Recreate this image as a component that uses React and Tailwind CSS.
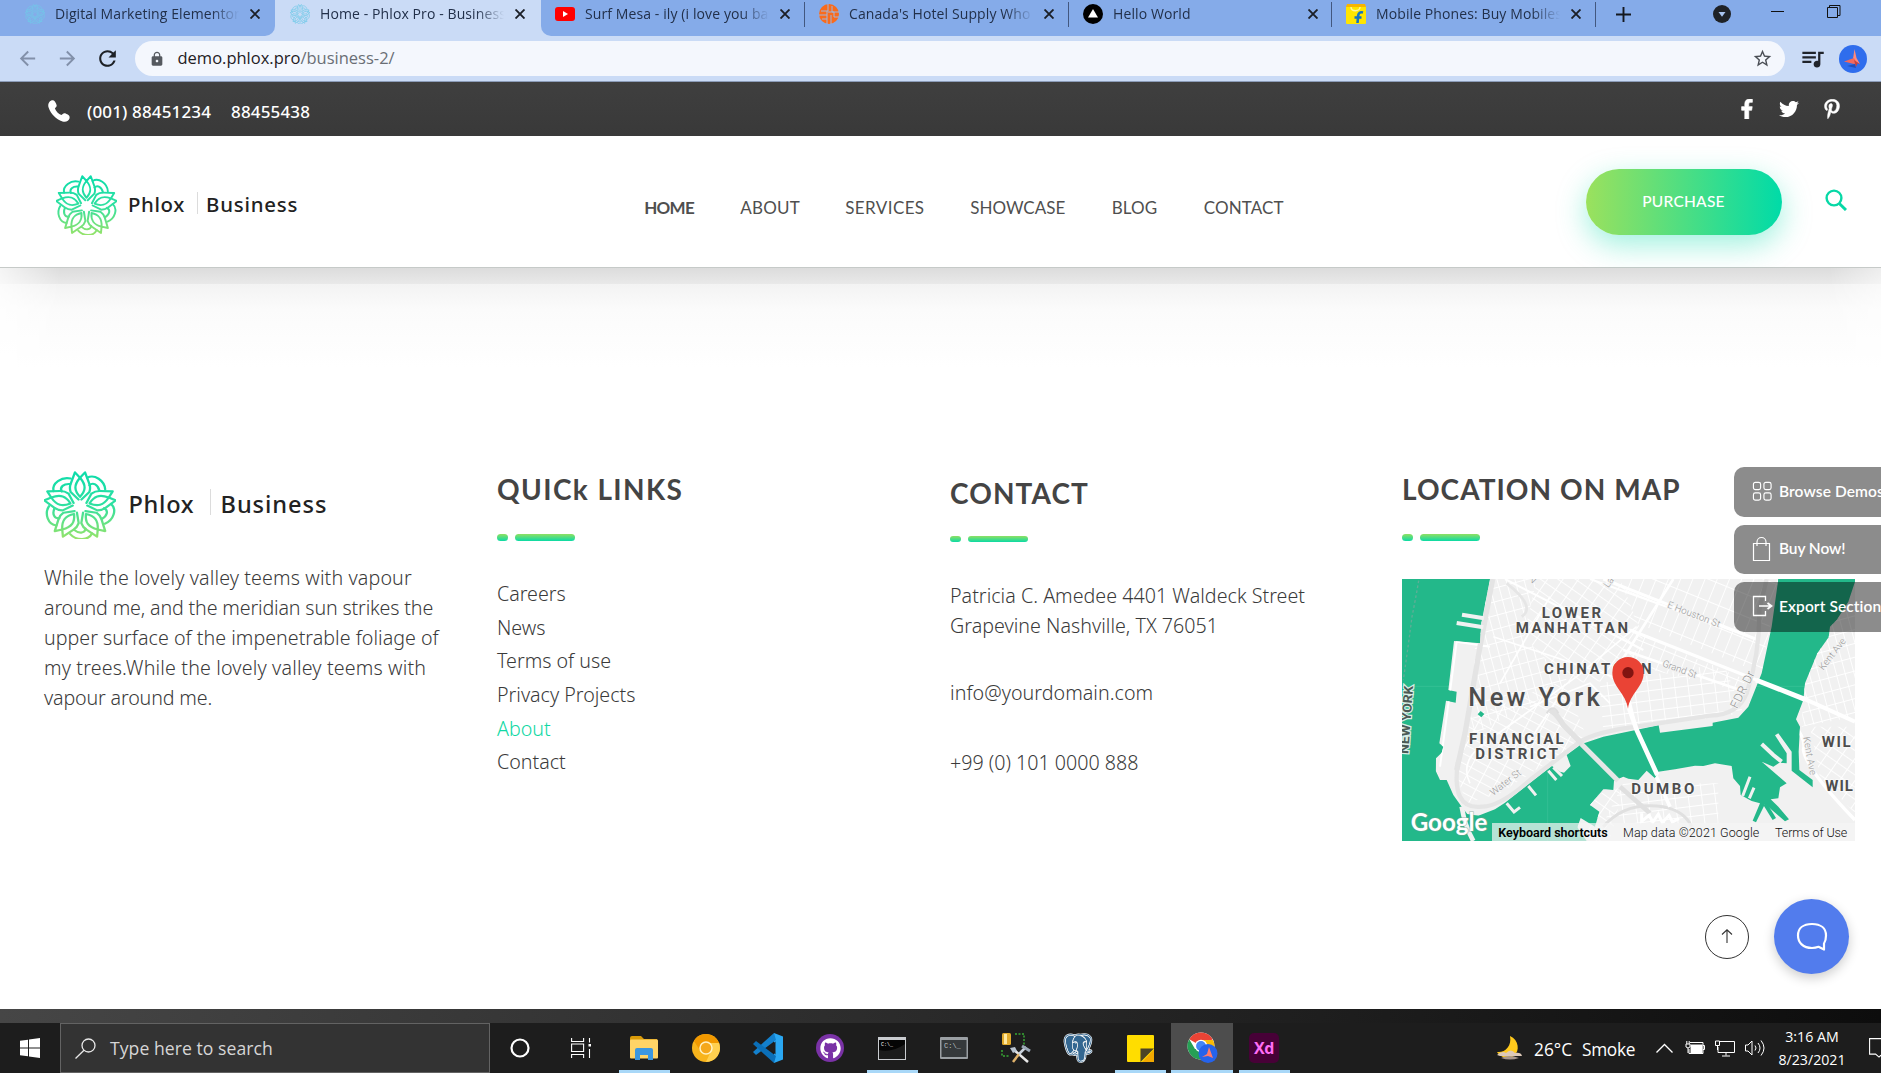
import React from "react";
import { FaFacebookF, FaTwitter, FaPinterestP, FaPhoneAlt, FaGithub } from "react-icons/fa";
import { MdLock, MdQueueMusic, MdStarBorder, MdArrowBack, MdArrowForward, MdRefresh } from "react-icons/md";
import { BiLogoPostgresql } from "react-icons/bi";

function Flower({ id, className, flat }) {
  return (
    <svg viewBox="0 0 100 100" preserveAspectRatio="none" className={className}>
      <defs>
        <linearGradient id={id + "g"} x1="0" y1="0" x2="0" y2="1">
          <stop offset="0" stopColor={flat ? "#6fc9e8" : "#0bdcab"} />
          <stop offset="0.5" stopColor={flat ? "#6fc9e8" : "#2ee0a0"} />
          <stop offset="1" stopColor={flat ? "#6fc9e8" : "#96e36a"} />
        </linearGradient>
        <mask id={id + "m"} maskUnits="userSpaceOnUse" x="0" y="0" width="100" height="100">
          {[0, 72, 144, 216, 288].map((a) => (
            <g key={a} transform={`rotate(${a} 50 52)`} fill="none" stroke="#fff" strokeWidth="3.200" strokeLinejoin="round" strokeLinecap="round">
              <path d="M48 42 L37 31 Q35 25 37 19 L43 2 L50 10 L57 2 L63 19 Q65 25 63 31 L52 42" />
              <path d="M50 10 C41 21 42 29 50 38 C58 29 59 21 50 10Z" />
              <path d="M60 10 C70 4 84 14 85 27" />
              <path d="M63 21 C68 16 75 20 77 29" />
            </g>
          ))}
        </mask>
      </defs>
      <rect width="100" height="100" fill={`url(#${id}g)`} mask={`url(#${id}m)`} />
    </svg>
  );
}

function Favicon({ kind }) {
  if (kind === "youtube")
    return (
      <svg viewBox="0 0 20 20" className="size-5">
        <rect y="3" width="20" height="14" rx="3" fill="#f00" />
        <path d="M8 7l5 3-5 3z" fill="#fff" />
      </svg>
    );
  if (kind === "hotel")
    return (
      <svg viewBox="0 0 20 20" className="size-5">
        <circle cx="10" cy="10" r="10" fill="#f96b1c" />
        <path d="M9 0v7H2M8 7v4H0M8 11v9M13 2v6h7M9 8h6v5h5M12 11v9M3 15h5" stroke="#9fb6dd" fill="none" />
      </svg>
    );
  if (kind === "vercel")
    return (
      <svg viewBox="0 0 20 20" className="size-5">
        <circle cx="10" cy="10" r="10" fill="#000" />
        <path d="M10 5l5 8.500H5z" fill="#fff" />
      </svg>
    );
  if (kind === "flipkart")
    return (
      <svg viewBox="0 0 20 20" className="size-5">
        <rect y="2" width="20" height="18" rx="1" fill="#ffe500" />
        <path d="M1 0h18l1 3H0z" fill="#f8b400" />
        <path d="M5 3c0 5 9 5 9 0" stroke="#fff5a0" fill="none" strokeWidth="1.4" />
        <path d="M17 8.500c-3-.8-4.500.4-4.800 3L11.500 19M8.500 13.500h7" stroke="#1273c4" strokeWidth="2.600" fill="none" />
      </svg>
    );
  return <Flower id={kind} flat className="size-5" />;
}

function Tab({ icon, title, className, sep = true }) {
  return (
    <div className={`flex h-9 shrink-0 items-start pt-1 ${className}`}>
      <Favicon kind={icon} />
      <div className="ml-2.5 h-5 w-[186px] overflow-hidden whitespace-nowrap leading-5 [mask-image:linear-gradient(to_right,#000_84%,transparent_99%)]">{title}</div>
      <svg viewBox="0 0 10 10" className="ml-[9px] mt-[5px] size-[10px] shrink-0" stroke="#1b1f27" strokeWidth="1.900">
        <path d="M.5.5l9 9M9.500.5l-9 9" />
      </svg>
      {sep && <div className="-mt-0.5 ml-auto h-[25px] w-px bg-[#42577f]" />}
    </div>
  );
}

function TabStrip() {
  return (
    <div className="flex h-9 shrink-0 bg-[#85abe9] font-['Open_Sans',sans-serif] text-[14px] tracking-[0.1px] text-[#22304a]">
      <div className="bg-[#cadbf6]">
        <Tab icon="favA" title="Digital Marketing Elementor" className="w-[275px] rounded-br-[10px] bg-[#85abe9] pl-[25px]" sep={false} />
      </div>
      <Tab icon="favB" title="Home - Phlox Pro - Business" className="w-[266px] bg-[#cadbf6] pl-[15px]" sep={false} />
      <div className="bg-[#cadbf6]">
        <Tab icon="youtube" title="Surf Mesa - ily (i love you ba" className="w-[264px] rounded-bl-[10px] bg-[#85abe9] pl-[14px]" />
      </div>
      <Tab icon="hotel" title="Canada's Hotel Supply Who" className="w-[264px] pl-[14px]" />
      <Tab icon="vercel" title="Hello World" className="w-[263px] pl-[14px]" />
      <Tab icon="flipkart" title="Mobile Phones: Buy Mobiles" className="w-[264px] pl-[14px]" />
      <svg viewBox="0 0 15 15" className="ml-[20px] mt-[7px] size-[15px]" stroke="#14181f" strokeWidth="1.900">
        <path d="M7.500 0v15M0 7.500h15" />
      </svg>
      <svg viewBox="0 0 18 18" className="ml-[82px] mt-[5px] size-[18px]">
        <circle cx="9" cy="9" r="9" fill="#1f2227" />
        <path d="M5.500 7h7L9 11.800z" fill="#a9c4ef" />
      </svg>
      <svg viewBox="0 0 14 14" className="ml-[40px] mt-1 size-3.5">
        <path d="M0 7.500h13" stroke="#111" />
      </svg>
      <svg viewBox="0 0 14 14" className="ml-[42px] mt-[5px] size-3.5" fill="none" stroke="#111">
        <path d="M.5 2.500h10v10h-10zM2.500 2.500v-2h10.500v10h-2.500" />
      </svg>
    </div>
  );
}

function Toolbar() {
  return (
    <div className="flex h-[46px] shrink-0 items-center border-b border-[#8c9cb8] bg-[#cadbf6]">
      <MdArrowBack className="ml-[16px] size-[23px] text-[#8290a9]" />
      <MdArrowForward className="ml-[17px] size-[23px] text-[#8290a9]" />
      <MdRefresh className="ml-[16px] size-[25px] text-[#1d2126]" />
      <div className="ml-[15px] flex h-[35px] w-[1650px] items-center rounded-full bg-[#f4f7fd] font-['Open_Sans',sans-serif] text-[16.500px] text-[#1f2024]">
        <MdLock className="ml-[14px] size-[16px] text-[#55595f]" />
        <span className="ml-[12.500px]">demo.phlox.pro<span className="text-[#6a6e75]">/business-2/</span></span>
        <MdStarBorder className="ml-auto mr-[12px] size-[21px] text-[#4a4e55]" />
      </div>
      <MdQueueMusic className="ml-[14px] size-[27px] text-[#20242b]" />
      <svg viewBox="0 0 28 28" className="ml-[13px] size-7">
        <circle cx="14" cy="14" r="14" fill="#2f6ded" />
        <path d="M8 21l8-2 1 4z" fill="#1d4fbf" />
        <path d="M15.500 4l2 9 3.500 6-4-2-3-3z" fill="#ff8a7c" />
        <path d="M5 16.500l10-3.500 3 5-3 1z" fill="#f2695f" />
        <path d="M15 15l6 4-2.500-.5L17 22z" fill="#c9423f" />
      </svg>
    </div>
  );
}

function TopBar() {
  return (
    <div className="flex h-[54px] shrink-0 items-center bg-[linear-gradient(#3f3f3f,#393939)] pl-12 text-white">
      <svg viewBox="0 0 22 22" className="mt-[4px] size-[22px]" fill="#fff">
        <path d="M1.200 2.200C2.500.6 4.200.1 5.600.5 7 .9 8.600 4.200 8.700 5.600c0 1.400-1.300 2-1.800 3C8 11.500 10.500 14 13.400 15.100c1-.5 1.600-1.800 3-1.800 1.400.1 4.700 1.700 5.100 3.100.4 1.400-.1 3.100-1.700 4.400-1.500 1.100-3.500 1.200-5.300.6C7.800 19 3 14.200.6 7.500 0 5.700.1 3.700 1.200 2.200z" />
      </svg>
      <div className="ml-[17px] pt-[6px] font-['Noto_Sans',sans-serif] text-[17px] font-medium leading-6 tracking-[0.15px]">(001) 88451234</div>
      <div className="ml-[20px] pt-[6px] font-['Noto_Sans',sans-serif] text-[17px] font-medium leading-6 tracking-[0.15px]">88455438</div>
      <div className="ml-auto mr-[39px] flex items-center pb-[1px]">
        <FaFacebookF className="size-5 stroke-white [stroke-width:18]" />
        <FaTwitter className="ml-[22px] size-5" />
        <FaPinterestP className="ml-[23px] size-5 stroke-white [stroke-width:12]" />
      </div>
    </div>
  );
}

const nav = [
  ["HOME", "w-[96px] font-bold tracking-[-0.75px]"],
  ["ABOUT", "w-[105px] tracking-[0.25px]"],
  ["SERVICES", "w-[125px] tracking-[0.4px]"],
  ["SHOWCASE", "w-[141.5px]"],
  ["BLOG", "w-[92px] tracking-[0.1px]"],
  ["CONTACT", "w-[80px] tracking-[0.1px]"],
];

function Header() {
  return (
    <header className="flex h-[132px] shrink-0 border-b border-[#c6cac8] bg-white">
      <Flower id="hl" className="ml-[56px] mt-[38.500px] h-[60px] w-[61px]" />
      <div className="ml-[11px] mt-[54.500px] flex h-7 items-center font-['Noto_Sans',sans-serif] text-[20.400px] font-medium text-[#222]">
        <span className="w-[68.500px] tracking-[0.6px]">Phlox</span>
        <span className="mt-[-4px] h-[22px] w-px bg-[#dcdcdc]" />
        <span className="ml-[8.500px] tracking-[0.800px]">Business</span>
      </div>
      <nav className="ml-[346px] mt-[60px] flex h-[24px] w-[640px] shrink-0 whitespace-nowrap font-['Lato',sans-serif] text-[17px] leading-6 text-[#4f4f4f]">
        {nav.map(([t, c]) => (
          <a key={t} className={`shrink-0 ${c}`}>{t}</a>
        ))}
      </nav>
      <button className="ml-auto mt-[33px] flex h-[66px] w-[196px] shrink-0 items-center justify-center rounded-full bg-[linear-gradient(to_right,#9be15d,#00dba8)] pr-[1px] pb-[1px] font-['Lato',sans-serif] text-[15.500px] font-medium tracking-[0.250px] text-white shadow-[0_10px_30px_rgba(0,219,168,0.38)]">PURCHASE</button>
      <svg viewBox="0 0 22 22" className="ml-[43px] mr-[34px] mt-[53px] size-[22px]" fill="none" stroke="#07d8a6" strokeWidth="2.400">
        <circle cx="9" cy="9" r="7.400" />
        <path d="M14.300 14.500L21 21" strokeWidth="3" />
      </svg>
    </header>
  );
}

function Bars({ className }) {
  return (
    <div className={`flex gap-[7px] ${className}`}>
      <div className="h-full w-[11px] rounded-full bg-[linear-gradient(#8fe062,#0bdaa5)]" />
      <div className="h-full w-[60px] rounded-full bg-[linear-gradient(#8fe062,#0bdaa5)]" />
    </div>
  );
}

function Heading({ children, className }) {
  return <h3 className={`whitespace-nowrap font-['Lato',sans-serif] text-[28px] font-bold leading-8 text-[#444] ${className}`}>{children}</h3>;
}

const land = "#f1f1f1";
const water = "#23b88a";

function MapView() {
  return (
    <svg viewBox="36 387 1359 786" className="mt-[38px] h-[262px] w-[453px]" fontFamily="Roboto, sans-serif">
      <defs>
        <clipPath id="man">
          <path d="M300 387L274 520 270 580 192 573 175 720 200 725 197 758 168 752 148 880 160 890 155 908 138 925 137 962 150 990 170 990 190 1035 215 1070 232 1092 265 1097 315 1078 345 1058 474 957 486 948 510 965 522 968 542 948 530 915 575 882 640 860 806 826 810 848 968 828 968 818 1045 803 1075 770 1115 670 1145 530 1165 387Z" />
        </clipPath>
        <clipPath id="bk">
          <path d="M1395 395L1375 455 1340 510 1320 530 1316 562 1282 610 1245 700 1240 750 1218 808 1230 830 1226 905 1228 960 1268 990 1268 1012 1205 962 1205 905 1165 850 1155 856 1190 910 1190 940 1168 938 1150 950 1115 935 1190 1000 1170 1012 1165 1045 1142 1048 1165 1070 1197 1108 1185 1114 1125 1062 1098 1117 1088 1112 1110 1060 1085 1053 1052 1035 1050 1008 1030 985 1025 948 975 940 940 948 915 947 855 958 805 965 795 985 770 962 745 990 715 986 700 980 672 992 670 1020 648 1018 640 1018 600 1065 628 1085 615 1130 572 1104 562 1132 590 1173 1395 1173Z" />
        </clipPath>
        <pattern id="st1" width="34" height="62" patternUnits="userSpaceOnUse" patternTransform="rotate(22)">
          <path d="M0 1H34M1 0V62" stroke="#fff" strokeWidth="3.500" fill="none" />
        </pattern>
        <pattern id="st2" width="26" height="44" patternUnits="userSpaceOnUse" patternTransform="rotate(-62)">
          <path d="M0 1H26M1 0V44" stroke="#fff" strokeWidth="3.500" fill="none" />
        </pattern>
        <pattern id="st3" width="40" height="30" patternUnits="userSpaceOnUse" patternTransform="rotate(-7)">
          <path d="M0 1H40M1 0V30" stroke="#fff" strokeWidth="3.500" fill="none" />
        </pattern>
        <pattern id="st4" width="26" height="40" patternUnits="userSpaceOnUse" patternTransform="rotate(-15)">
          <path d="M0 1H26M1 0V40" stroke="#fff" strokeWidth="3.500" fill="none" />
        </pattern>
        <pattern id="st5" width="30" height="38" patternUnits="userSpaceOnUse" patternTransform="rotate(-55)">
          <path d="M0 1H30M1 0V38" stroke="#fff" strokeWidth="3.500" fill="none" />
        </pattern>
      </defs>
      <rect x="36" y="387" width="1359" height="786" fill={water} />
      <path d="M36 709H1395M473 387V1173" stroke="#3cc299" strokeWidth="2" />
      <path d="M86 392Q80 430 66 500Q56 580 40 690" stroke="#5fae96" strokeWidth="4" strokeDasharray="8 7" fill="none" />

      <g clipPath="url(#man)">
        <rect x="36" y="387" width="1359" height="786" fill={land} />
        <path d="M690 387H1165L1115 670 740 520Z" fill="url(#st1)" />
        <path d="M300 387H440L400 560 540 700 240 860 260 500Z" fill="url(#st4)" />
        <path d="M440 387H690L760 560 700 690 540 700 400 560Z" fill="url(#st5)" />
        <path d="M630 700L1000 640 1060 790 640 850Z" fill="url(#st3)" />
        <path d="M240 800L520 690 590 860 330 1030 230 1060 200 980Z" fill="url(#st2)" />
        <path d="M740 550L1070 690 1040 720 700 640Z" fill="url(#st1)" />
        <g fill="none" stroke="#fff">
          <path d="M300 590L200 575 150 950M345 387L760 600M600 387L1100 568" strokeWidth="6" />
          <path d="M640 387L1100 568M720 540L1100 690" strokeWidth="9" />
          <path d="M850 387L690 640 740 840M700 600L1050 720" strokeWidth="8" />
          <path d="M240 1000Q210 940 270 890L560 680 740 530M420 770L600 700 660 760" strokeWidth="5" />
          <path d="M310 560L700 690M330 700L480 440M400 900L520 720" strokeWidth="5" />
        </g>
        <path d="M308 387L270 590 225 850 200 960" stroke="#e4e4e4" strokeWidth="16" fill="none" />
        <path d="M350 400Q440 470 395 500" stroke="#e6e6e6" strokeWidth="8" fill="none" />
        <path d="M205 930Q180 1080 275 1070Q330 1070 420 990L570 875Q620 845 740 830L960 797Q1045 795 1070 730Q1110 610 1108 480L1130 387" stroke="#e5e5e5" strokeWidth="13" fill="none" />
        <path d="M480 780Q500 790 520 825L580 885" stroke="#e2e2e2" strokeWidth="16" fill="none" />
        <path d="M470 790q20-30 35 0" stroke="#dedede" strokeWidth="6" fill="none" />
      </g>
      <path d="M216 494L282 505M200 519L280 532" stroke={land} strokeWidth="12" />
      <path d="M272 783l11 9-9 10-11-9z" fill={water} />
      <g stroke={land} strokeWidth="9" fill="none">
        <path d="M475 962l24 28M490 952l26 26M415 1008l23 28M350 1060l22 26 18-14" />
      </g>

      <g clipPath="url(#bk)">
        <rect x="36" y="387" width="1359" height="786" fill={land} />
        <path d="M1300 540L1395 460V800L1235 830 1240 720Z" fill="url(#st4)" />
        <path d="M1260 830H1395V1090L1290 980Z" fill="url(#st5)" />
        <path d="M700 1000L985 1000V1120H640Z" fill="url(#st3)" />
        <path d="M600 1040L700 1010 660 1173H590Z" fill="url(#st5)" />
        <path d="M1210 820Q1250 870 1240 900Q1250 960 1395 1110" stroke="#fff" strokeWidth="10" fill="none" />
        <path d="M1240 745L1395 815" stroke="#fff" strokeWidth="12" />
        <path d="M640 1130Q700 1060 800 1068Q880 1075 905 1130" stroke="#e0e0e0" strokeWidth="9" fill="none" />
        <path d="M690 1010L780 1090" stroke="#e0e0e0" strokeWidth="14" />
        <path d="M755 1090v24l22-18 12 20 16-24 12 26 20-22 10 20 20-10" stroke="#fff" strokeWidth="9" fill="none" />
        <path d="M790 960L840 1070" stroke="#fff" strokeWidth="11" />
      </g>
      <path d="M1115 882L1150 915 1175 935" stroke={land} strokeWidth="12" fill="none" />
      <path d="M1058 1038l22-58M1078 1045l14-32" stroke={land} strokeWidth="9" />
      <path d="M1125 1062l28 45" stroke={water} strokeWidth="12" />
      <path d="M574 882L684 992" stroke="#e6e6e6" strokeWidth="15" />
      <path d="M714 765L740 840 802 975" stroke="#fff" strokeWidth="14" fill="none" />
      <path d="M1098 690L1245 748" stroke="#fff" strokeWidth="15" />
      <path d="M215 1070Q225 1130 250 1173" stroke={land} strokeWidth="14" fill="none" />

      <g fontSize="29" fill="#999" stroke="#f4f4f4" strokeWidth="5" paintOrder="stroke">
        <text transform="translate(830 472) rotate(21)" textLength="168">E Houston St</text>
        <text transform="translate(815 648) rotate(20)" textLength="108">Grand St</text>
        <text transform="translate(310 1038) rotate(-38)" textLength="108">Water St</text>
        <text transform="translate(1300 662) rotate(-52)" textLength="112">Kent Ave</text>
        <text transform="translate(1240 862) rotate(80)" textLength="116">Kent Ave</text>
        <text transform="translate(1042 778) rotate(-64)" textLength="120" fontSize="36" fill="#8f8f8f">FDR Dr</text>
        <text transform="translate(655 415) rotate(-55)">La</text>
        <text transform="translate(418 395) rotate(25)">V</text>
      </g>
      <text transform="translate(55 912) rotate(-86)" textLength="204" lengthAdjust="spacingAndGlyphs" fontSize="38" fontWeight="700" fill="#4b5a55" stroke="#d9eee6" strokeWidth="7" paintOrder="stroke">NEW YORK</text>
      <g fill="#4d4d4d" stroke="#fafafa" strokeWidth="5" paintOrder="stroke" fontSize="45" fontWeight="700">
        <text x="455" y="503" textLength="178">LOWER</text>
        <text x="377" y="548" textLength="337">MANHATTAN</text>
        <text x="462" y="671" textLength="323">CHINATOWN</text>
        <text x="237" y="881" textLength="284">FINANCIAL</text>
        <text x="256" y="926" textLength="248">DISTRICT</text>
        <text x="724" y="1031" textLength="189">DUMBO</text>
        <text x="1295" y="892" letterSpacing="5">WIL</text>
        <text x="1306" y="1024" letterSpacing="3">WIL</text>
        <text x="235" y="768" textLength="394" fontSize="76" fontWeight="500" stroke="#f6f6f6">New York</text>
      </g>
      <path d="M714 776C708 730 667 710 667 668a47 47 0 0 1 94 0C761 710 720 730 714 776Z" fill="#ea4335" />
      <circle cx="714" cy="668" r="17" fill="#811411" />
      <text x="62" y="1143" fontFamily="Lato, sans-serif" fontSize="74" fontWeight="700" textLength="230" lengthAdjust="spacingAndGlyphs" fill="#fff" stroke="#7c9c90" strokeOpacity="0.500" strokeWidth="5" paintOrder="stroke">Google</text>
      <rect x="306" y="1119" width="1089" height="54" fill="#f5f5f5" fillOpacity="0.700" />
      <g fontSize="37.500" fill="#111">
        <text x="325" y="1161" fontWeight="600" textLength="328" fill="#000">Keyboard shortcuts</text>
        <text x="699" y="1161" textLength="409">Map data ©2021 Google</text>
        <text x="1155" y="1161" textLength="217">Terms of Use</text>
      </g>
    </svg>
  );
}

const links = [["Careers", ""], ["News", ""], ["Terms of use", ""], ["Privacy Projects", ""], ["About", "text-[#10d8a4]"], ["Contact", ""]];

function Footer() {
  return (
    <footer className="flex flex-1 pl-[44px] pt-[86px] font-['Noto_Sans',sans-serif] text-[19.650px] font-light text-[#3a3a3a]">
      <div className="w-[453px] shrink-0 pt-[17px]">
        <div className="flex">
          <Flower id="fl" className="h-[68px] w-[72px]" />
          <div className="ml-[12.500px] mt-[16px] flex h-[34px] items-center text-[23.600px] font-medium leading-[34px] text-[#222]">
            <span className="w-[81px] tracking-[0.7px]">Phlox</span>
            <span className="-mt-1 h-[26px] w-px bg-[#dcdcdc]" />
            <span className="ml-[10px] tracking-[0.950px]">Business</span>
          </div>
        </div>
        <p className="mt-[24px] whitespace-nowrap leading-[30px]">
          <span className="tracking-[0.130px]">While the lovely valley teems with vapour</span><br />
          <span className="tracking-[-0.150px]">around me, and the meridian sun strikes the</span><br />
          <span className="tracking-[0.030px]">upper surface of the impenetrable foliage of</span><br />
          <span className="tracking-[0.160px]">my trees.While the lovely valley teems with</span><br />
          <span className="tracking-[-0.150px]">vapour around me.</span>
        </p>
      </div>
      <div className="w-[453px] shrink-0 pt-[19px]">
        <Heading className="tracking-[1.400px]">QUICk LINKS</Heading>
        <Bars className="mt-[29px] h-[7px]" />
        <div className="mt-[36px]">
          {links.map(([t, c]) => (
            <div key={t} className={`h-[33.700px] leading-[33.700px] ${c}`}>{t}</div>
          ))}
        </div>
      </div>
      <div className="w-[453px] shrink-0 pt-[23px]">
        <Heading className="tracking-[1.100px]">CONTACT</Heading>
        <Bars className="mt-[27px] h-[6px]" />
        <p className="mt-[39px] leading-[30px] tracking-[0.030px]">Patricia C. Amedee 4401 Waldeck Street<br />Grapevine Nashville, TX 76051</p>
        <p className="mt-[37px] leading-[30px] tracking-[0.050px]">info@yourdomain.com</p>
        <p className="mt-[40px] leading-[30px]">+99 (0) 101 0000 888</p>
      </div>
      <div className="-ml-px w-[453px] shrink-0 pt-[19px]">
        <Heading className="tracking-[1.050px]">LOCATION ON MAP</Heading>
        <Bars className="mt-[29px] h-[7px]" />
        <MapView />
      </div>
    </footer>
  );
}

function SideButtons() {
  const base = "flex h-[49.500px] w-[170px] items-center whitespace-nowrap rounded-[10px] bg-[rgba(0,0,0,0.45)] pl-[18px] pb-px";
  return (
    <div className="absolute left-[1734px] top-[467px] flex flex-col gap-[8px] font-['Lato',sans-serif] text-[15.500px] font-semibold text-white">
      <div className={base}>
        <svg viewBox="0 0 22 22" className="mr-[6px] size-[21px]" fill="none" stroke="#fff" strokeWidth="1.200">
          <rect x="1.500" y="1.500" width="7.500" height="7.500" rx="2" /><rect x="12.500" y="1.500" width="7.500" height="7.500" rx="2" />
          <rect x="1.500" y="12.500" width="7.500" height="7.500" rx="2" /><rect x="12.500" y="12.500" width="7.500" height="7.500" rx="2" />
        </svg>
        <span className="tracking-[0.1px]">Browse Demos</span>
      </div>
      <div className={base}>
        <svg viewBox="0 0 21 26" className="mr-[6px] h-[26px] w-[21px]" fill="none" stroke="#fff" strokeWidth="1.200">
          <path d="M1.500 7.500h16v17h-16zM5 10V6a4.500 4.500 0 0 1 9 0v4" />
        </svg>
        <span className="tracking-[-0.1px]">Buy Now!</span>
      </div>
      <div className={base}>
        <svg viewBox="0 0 21 22" className="mr-[6px] h-[22px] w-[21px]" fill="none" stroke="#fff" strokeWidth="1.300">
          <path d="M13.500 6V1.500h-12v19h12V16" /><path d="M7 11h12M15.500 8l4 3-4 3" strokeWidth="1.700" />
        </svg>
        <span className="tracking-[0.1px]">Export Section</span>
      </div>
    </div>
  );
}

function FloatingButtons() {
  return (
    <div className="absolute left-[1705px] top-[899px] flex items-center">
      <div className="flex size-[44px] items-center justify-center rounded-full border border-[#333]">
        <svg viewBox="0 0 12 14" className="-ml-px -mt-px h-3.5 w-3" fill="none" stroke="#333" strokeWidth="1.100"><path d="M6 14V1M1 5.500L6 .8 11 5.500" /></svg>
      </div>
      <div className="ml-[25px] flex size-[75px] items-center justify-center rounded-full bg-[#527ced] shadow-[0_4px_12px_rgba(0,0,0,0.2)]">
        <svg viewBox="0 0 32 30" className="h-[30px] w-8" fill="none" stroke="#fff" strokeWidth="2.200" strokeLinejoin="round">
          <path d="M28 27.500V21.500C29.700 19 30 16 30 13.500 30 6.500 25 2 16 2S2 6.500 2 13.500 7 26 16 26c2.500 0 4.500-.4 6.500-1.200z" />
        </svg>
      </div>
    </div>
  );
}

function AppIcon({ kind }) {
  switch (kind) {
    case "cortana":
      return <svg viewBox="0 0 20 20" className="size-5"><circle cx="10" cy="10" r="8.500" fill="none" stroke="#fff" strokeWidth="2.200" /></svg>;
    case "taskview":
      return (
        <svg viewBox="0 0 20 20" className="-ml-0.5 size-5" fill="none" stroke="#fff" strokeWidth="1.100">
          <path d="M.6 0v3.500h12V0M.6 20v-3.500h12V20M.6 6h12v7.500H.6zM18.500 0v4.500M18.500 11v9" /><rect x="17.500" y="6" width="2.500" height="2.500" fill="#fff" stroke="none" />
        </svg>
      );
    case "explorer":
      return (
        <svg viewBox="0 0 28 24" className="h-6 w-7">
          <path d="M0 2q0-2 2-2h9l3 3h13v4H0z" fill="#d99a08" /><rect y="3.500" width="28" height="19" rx="1" fill="#ffd467" />
          <path d="M5 24V14q0-2 2-2h14q2 0 2 2v10h-5v-5h-8v5z" fill="#3b97e0" />
        </svg>
      );
    case "canary":
      return (
        <svg viewBox="0 0 28 28" className="size-7"><circle cx="14" cy="14" r="14" fill="#f8b41c" /><path d="M1.900 7A14 14 0 0 1 27 9H14A6 6 0 0 0 8.500 17z" fill="#f29900" /><path d="M27 9A14 14 0 0 1 14 28L19 17Q21 12 17 9z" fill="#ffd04f" /><circle cx="14" cy="14" r="6" fill="#f5a81c" stroke="#fff2c5" strokeWidth="1.500" /></svg>
      );
    case "vscode":
      return (
        <svg viewBox="0 0 30 30" className="size-[30px]"><path d="M21 0l9 3.500v23L21 30z" fill="#2aa7f2" /><path d="M21 0L0 19l3 3L23 7z" fill="#1380cd" /><path d="M21 30L0 11l3-3 20 15z" fill="#0b6fb8" /><path d="M22.500 8.500v13L14 15z" fill="#1e1e1e" /></svg>
      );
    case "github":
      return <div className="flex size-7 items-center justify-center rounded-full bg-[#7a32a6]"><FaGithub className="size-[21px] text-white" /></div>;
    case "cmd":
      return (
        <svg viewBox="0 0 28 23" className="h-[23px] w-7"><rect width="28" height="23" fill="#c9ccd0" /><rect x="1" y="3" width="26" height="19" fill="#050505" /><path d="M1 13Q14 16 27 7v15H1z" fill="#1c1c1c" /><text x="3" y="8.500" fontSize="5" fill="#fff" fontFamily="Liberation Mono, monospace">C:\_</text></svg>
      );
    case "console":
      return (
        <svg viewBox="0 0 28 22" className="h-[22px] w-7"><rect width="28" height="22" rx="1" fill="#9a9fa3" /><rect x="1.500" y="3" width="25" height="17" fill="#35393b" /><text x="4" y="11" fontSize="7" fill="#bfc4c7" fontFamily="Liberation Mono, monospace">C:\_</text></svg>
      );
    case "tools":
      return (
        <svg viewBox="0 0 30 30" className="size-[30px]"><rect x="1" y="0" width="9" height="12" rx="1.500" fill="#e2ab2c" /><rect x="3" y="1" width="3" height="10" fill="#ffe9a0" /><path d="M14 1h9v11M1 17v6h8" stroke="#39a935" strokeWidth="1.500" strokeDasharray="2 1.500" fill="none" /><path d="M13 17l14 12" stroke="#e8e8e8" strokeWidth="2.500" /><path d="M18 21L12 29" stroke="#e0b26a" strokeWidth="2.500" /><path d="M18 21L25 14" stroke="#c9d2dc" strokeWidth="2.500" /><path d="M21 13l8 5" stroke="#9aa7b5" strokeWidth="3" /><path d="M9 15l5-1 2 4-4 2z" fill="#b8c3cf" /></svg>
      );
    case "postgres":
      return <BiLogoPostgresql className="size-[34px] fill-[#336791] stroke-white stroke-[0.9] [paint-order:stroke]" />;
    case "notes":
      return (
        <svg viewBox="0 0 27 27" className="size-[27px]"><rect width="27" height="27" rx="1" fill="#fd0" /><path d="M13.500 27V13.500H27z" fill="#4a4326" /><path d="M15 27L27 14.500V27z" fill="#f2a900" /></svg>
      );
    case "chrome":
      return (
        <svg viewBox="0 0 32 32" className="size-8">
          <circle cx="15" cy="14" r="13.500" fill="#fff" /><path d="M15 14L3.300 7.200A13.500 13.500 0 0 1 26.700 7.200z" fill="#ea4335" /><path d="M3.300 7.200A13.500 13.500 0 0 0 15 27.500L20 17 9 17z" fill="#26a055" /><path d="M15 8H27a13.500 13.500 0 0 1-12 19.500L21 17z" fill="#fbbc05" />
          <circle cx="15" cy="14" r="6.200" fill="#fff" /><circle cx="15" cy="14" r="4.900" fill="#4285f4" /><circle cx="22" cy="21.500" r="9.500" fill="#2563eb" /><path d="M23 15l4 11-5-2-6 1 5-3z" fill="#ff7a6b" />
        </svg>
      );
    default:
      return <div className="flex size-[30px] items-center justify-center rounded-[5px] bg-[#470137] font-['Open_Sans',sans-serif] text-[16px] font-bold leading-none tracking-[-0.3px] text-[#ff6df5]">Xd</div>;
  }
}

const apps = [["cortana"], ["taskview"], ["explorer", 1], ["canary"], ["vscode"], ["github"], ["cmd", 1], ["console"], ["tools"], ["postgres"], ["notes", 1], ["chrome", 2], ["xd", 1]];

function Taskbar() {
  return (
    <div className="flex h-[50px] shrink-0 bg-[#1d1d1d] font-['Open_Sans',sans-serif] text-white">
      <div className="flex w-[60px] justify-center pt-[15px]">
        <svg viewBox="0 0 20 20" className="size-5" fill="#fff"><path d="M0 2.800L8 1.700V9.500H0zM9 1.500L20 0V9.500H9zM0 10.500H8V18.300L0 17.200zM9 10.500H20V20L9 18.500z" /></svg>
      </div>
      <div className="flex w-[430px] items-center border border-[#636363] bg-[#333] text-[17.600px] text-[#d6d6d6]">
        <svg viewBox="0 0 21 21" className="ml-[14px] size-[21px]" fill="none" stroke="#e8e8e8" strokeWidth="1.300"><circle cx="13.500" cy="7.500" r="6.500" /><path d="M9 12.300L.5 20.500" /></svg>
        <span className="ml-[14px] tracking-[0.05px]">Type here to search</span>
      </div>
      <div className="-ml-px flex">
        {apps.map(([k, s]) => (
          <div key={k} className={`flex h-full w-[62px] shrink-0 flex-col items-center ${s === 2 ? "bg-[#4d4d4d]" : ""}`}>
            <div className="flex h-[47px] items-center pt-[3px]"><AppIcon kind={k} /></div>
            {s && <div className={`h-[3px] bg-[#a9d8f8] ${s === 2 ? "w-full" : "w-[51px]"}`} />}
          </div>
        ))}
      </div>
      <div className="ml-auto flex shrink-0 items-center">
        <svg viewBox="0 0 28 24" className="h-6 w-7">
          <path d="M14 0C23 4 24 15 18 20 12 24 4 21 1 16 9 17 16 10 14 0z" fill="#ffc91c" />
          <path d="M1 19q5-5 9-2 5-5 9 0 6-1 7 3H4z" fill="#ddc9b8" /><path d="M5 22q8-4 18 0-9 3-18 0z" fill="#a8968b" />
        </svg>
        <span className="ml-[10px] w-[48px] pt-[3px] text-[17.300px]">26°C</span>
        <span className="w-[74px] pt-[3px] text-[17.300px] tracking-[-0.3px]">Smoke</span>
        <svg viewBox="0 0 17 10" className="h-2.5 w-[17px]" fill="none" stroke="#fff" strokeWidth="1.300"><path d="M.5 9.500l8-8 8 8" /></svg>
        <svg viewBox="0 0 20 16" className="ml-[12px] h-4 w-5"><path d="M5.500 4.500h12v9h-12z" fill="#fff" /><path d="M5 2.500h13v11H4V9M18 5.500h1.500v4H18M1 4h4v3q-2 2-4 0zM1.800 4V1M4.200 4V1M3 8v5" fill="none" stroke="#fff" /></svg>
        <svg viewBox="0 0 20 17" className="ml-[10px] h-[17px] w-5" fill="none" stroke="#fff"><path d="M5 1.500h14.500v11H3V7M11 12.500v3M7 16h8M.5 1h4v4.500h-4zM2.500 5.500V10" /></svg>
        <svg viewBox="0 0 20 18" className="ml-[10px] h-[18px] w-5" fill="none" stroke="#fff"><path d="M.5 6H3l4-4v14l-4-4H.5zM10 6.500q2 2.500 0 5M13 4q4 5 0 10M16 1.500q6 7.500 0 15" /></svg>
        <div className="ml-[8px] w-[78px] whitespace-nowrap text-center text-[14.200px] leading-[23px]">3:16 AM<br />8/23/2021</div>
        <svg viewBox="0 0 12 20" className="ml-[18px] h-5 w-3" fill="none" stroke="#fff" strokeWidth="1.100"><path d="M12 .6H.6v15.500h6l3.400 3 2-2" /></svg>
      </div>
    </div>
  );
}

export default function App() {
  return (
    <div className="relative flex h-[1073px] w-[1881px] flex-col overflow-hidden bg-white">
      <TabStrip />
      <Toolbar />
      <TopBar />
      <Header />
      <div className="flex h-[100px] shrink-0 flex-col [mask-image:linear-gradient(to_right,rgba(0,0,0,0.3),#000_60px,#000_1830px,rgba(0,0,0,0.5))]">
        <div className="h-[16px] bg-[linear-gradient(#dcdcdc,#e9e9e9)]" />
        <div className="h-[84px] bg-[linear-gradient(#f3f3f3,#fbfbfb_30%,#fff)]" />
      </div>
      <Footer />
      <div className="h-[14px] shrink-0 bg-[linear-gradient(to_right,#464646,#0d0d0d)]" />
      <Taskbar />
      <SideButtons />
      <FloatingButtons />
    </div>
  );
}
